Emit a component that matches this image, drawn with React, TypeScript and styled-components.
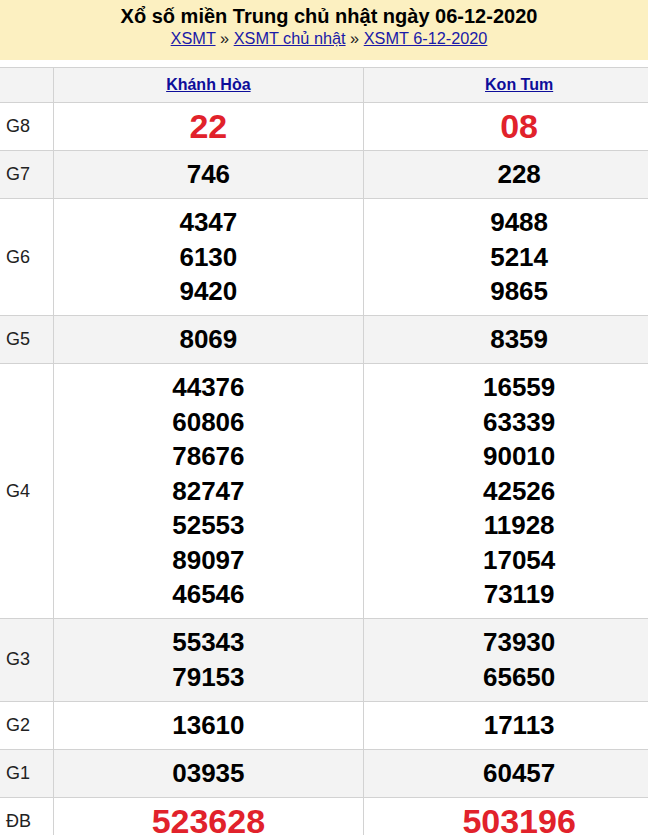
import React from "react";
import styled, { createGlobalStyle } from "styled-components";

const GlobalStyle = createGlobalStyle`
  html, body {
    margin: 0;
    padding: 0;
    background: #fff;
    overflow-x: hidden;
  }
  body {
    font-family: "Liberation Sans", Arial, sans-serif;
    color: #000;
  }
`;

const Header = styled.header`
  background: #fcf0c1;
  text-align: center;
  padding: 4px 0 12px 10px;
`;

const Title = styled.h1`
  margin: 0;
  font-size: 20px;
  line-height: 24px;
  font-weight: bold;
  color: #000;
`;

const Crumbs = styled.div`
  font-size: 16.3px;
  line-height: 20px;
  color: #222;

  a {
    color: #1a1aa8;
    text-decoration: underline;
  }
`;

const Table = styled.table`
  margin-top: 7px;
  width: 675px;
  border-collapse: collapse;
  table-layout: fixed;
`;

const HeadCell = styled.th`
  background: #f3f3f3;
  border: 1px solid #d2d2d2;
  padding: 8px 0;
  line-height: 18px;
  font-size: 16px;
  font-weight: bold;
  text-align: center;

  &:first-child {
    border-left: none;
  }

  a {
    color: #0d0d9a;
    text-decoration: underline;
  }
`;

const Row = styled.tr<{ shaded: boolean }>`
  background: ${(props) => (props.shaded ? "#f3f3f3" : "#fff")};
`;

const Label = styled.td`
  border: 1px solid #d2d2d2;
  border-left: none;
  padding: 0 0 0 6px;
  font-size: 18px;
  color: #222;
  vertical-align: middle;
`;

const Numbers = styled.td<{ big: boolean }>`
  border: 1px solid #d2d2d2;
  padding: 6.25px 0;
  text-align: center;
  font-weight: bold;
  font-size: ${(props) => (props.big ? "34px" : "26px")};
  line-height: 34.5px;
  color: ${(props) => (props.big ? "#e1222b" : "#000")};
`;

interface Prize {
  name: string;
  big?: boolean;
  khanhHoa: string[];
  konTum: string[];
}

const prizes: Prize[] = [
  { name: "G8", big: true, khanhHoa: ["22"], konTum: ["08"] },
  { name: "G7", khanhHoa: ["746"], konTum: ["228"] },
  {
    name: "G6",
    khanhHoa: ["4347", "6130", "9420"],
    konTum: ["9488", "5214", "9865"],
  },
  { name: "G5", khanhHoa: ["8069"], konTum: ["8359"] },
  {
    name: "G4",
    khanhHoa: ["44376", "60806", "78676", "82747", "52553", "89097", "46546"],
    konTum: ["16559", "63339", "90010", "42526", "11928", "17054", "73119"],
  },
  { name: "G3", khanhHoa: ["55343", "79153"], konTum: ["73930", "65650"] },
  { name: "G2", khanhHoa: ["13610"], konTum: ["17113"] },
  { name: "G1", khanhHoa: ["03935"], konTum: ["60457"] },
  { name: "ĐB", big: true, khanhHoa: ["523628"], konTum: ["503196"] },
];

export default function App() {
  return (
    <>
      <GlobalStyle />
      <Header>
        <Title>Xổ số miền Trung chủ nhật ngày 06-12-2020</Title>
        <Crumbs>
          <a href="#">XSMT</a> » <a href="#">XSMT chủ nhật</a> »{" "}
          <a href="#">XSMT 6-12-2020</a>
        </Crumbs>
      </Header>
      <Table>
        <colgroup>
          <col style={{ width: 53 }} />
          <col />
          <col />
        </colgroup>
        <thead>
          <tr>
            <HeadCell></HeadCell>
            <HeadCell>
              <a href="#">Khánh Hòa</a>
            </HeadCell>
            <HeadCell>
              <a href="#">Kon Tum</a>
            </HeadCell>
          </tr>
        </thead>
        <tbody>
          {prizes.map((prize, i) => (
            <Row key={prize.name} shaded={i % 2 === 1}>
              <Label>{prize.name}</Label>
              <Numbers big={!!prize.big}>
                {prize.khanhHoa.map((n) => (
                  <div key={n}>{n}</div>
                ))}
              </Numbers>
              <Numbers big={!!prize.big}>
                {prize.konTum.map((n) => (
                  <div key={n}>{n}</div>
                ))}
              </Numbers>
            </Row>
          ))}
        </tbody>
      </Table>
    </>
  );
}
